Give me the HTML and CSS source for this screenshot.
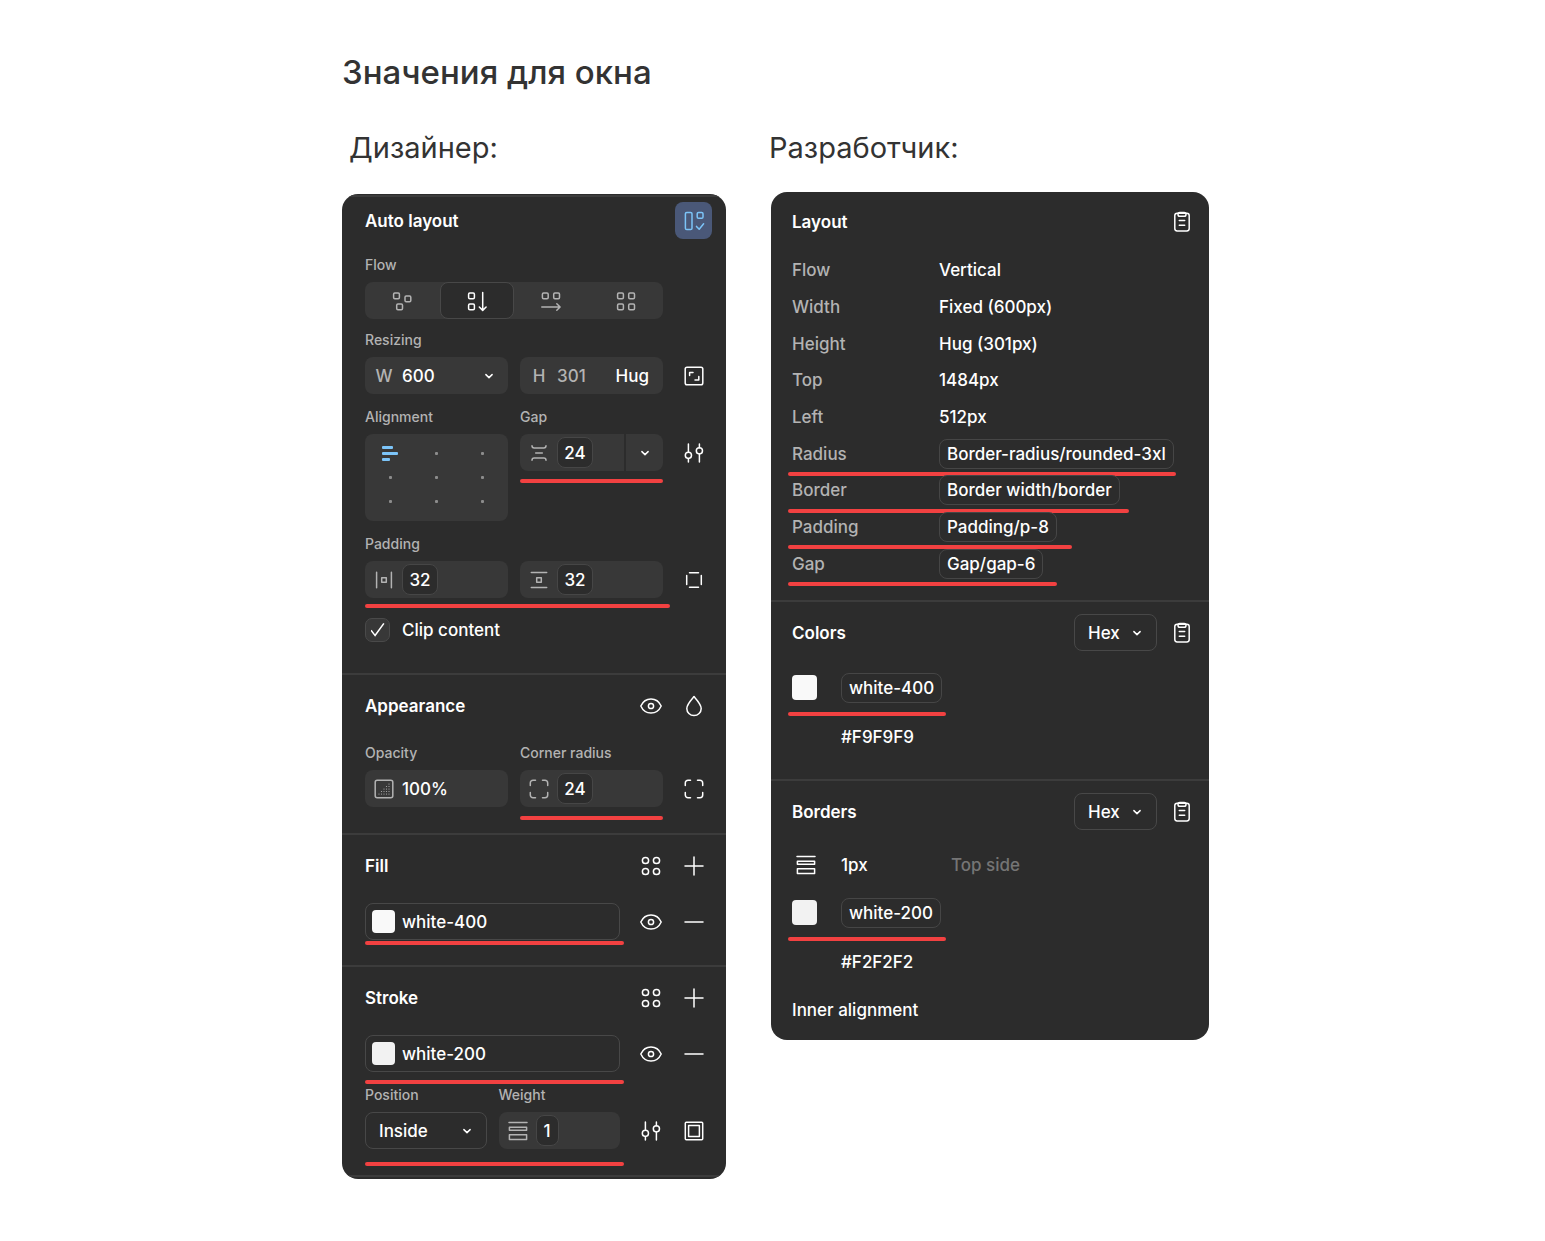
FILE: index.html
```html
<!DOCTYPE html>
<html lang="ru">
<head>
  <meta charset="UTF-8" />
  <meta name="viewport" content="width=device-width, initial-scale=1" />
  <title>Значения для окна</title>
  <link rel="stylesheet" href="styles.css">
</head>
<body>

  <!-- Icon sprite -->
  <svg class="sprite" aria-hidden="true">
    <symbol id="i-clipboard" viewBox="0 0 24 24"><rect x="4.8" y="3.2" width="14.4" height="17.8" rx="2.4"/><rect x="8" y="2.4" width="8" height="3.8" rx="1.8"/><path d="M9.3 10.6h5.4M9.3 15.2h5.4"/></symbol>
    <symbol id="i-autolayout" viewBox="0 0 24 24"><rect x="3.4" y="3.4" width="6.6" height="17.2" rx="1.4"/><rect x="15.2" y="3.4" width="5.8" height="5.8" rx="1.3"/><path d="M14.5 17.4l2.7 2.8 4.4-5.4"/></symbol>
    <symbol id="i-free" viewBox="0 0 24 24"><rect x="3.6" y="4" width="5.8" height="5.8" rx="1.2"/><rect x="15" y="7" width="5.8" height="5.8" rx="1.2"/><rect x="6.7" y="15" width="5.8" height="5.8" rx="1.2"/></symbol>
    <symbol id="i-vertical" viewBox="0 0 24 24"><rect x="3.6" y="4" width="5.8" height="5.8" rx="1.2"/><rect x="3.6" y="15" width="5.8" height="5.8" rx="1.2"/><path d="M17.7 3.4v17.8M14.3 18l3.4 3.4 3.4-3.4"/></symbol>
    <symbol id="i-horizontal" viewBox="0 0 24 24"><rect x="3.4" y="4" width="5.8" height="5.8" rx="1.2"/><rect x="14.7" y="4" width="5.8" height="5.8" rx="1.2"/><path d="M2.8 18h18M17.8 14.7l3.3 3.3-3.3 3.3"/></symbol>
    <symbol id="i-grid" viewBox="0 0 24 24"><rect x="3.6" y="4" width="5.8" height="5.8" rx="1.2"/><rect x="14.7" y="4" width="5.8" height="5.8" rx="1.2"/><rect x="3.6" y="15" width="5.8" height="5.8" rx="1.2"/><rect x="14.7" y="15" width="5.8" height="5.8" rx="1.2"/></symbol>
    <symbol id="i-fit" viewBox="0 0 24 24"><rect x="3.2" y="3.2" width="17.6" height="17.6" rx="1.8"/><path d="M7.6 11.4V8.4h3.4M13 16h3.8v-3.6"/></symbol>
    <symbol id="i-chevron" viewBox="0 0 24 24"><path d="M8.9 10.6l3.1 3 3.1-3"/></symbol>
    <symbol id="i-gap" viewBox="0 0 24 24"><path d="M5 4.8c0 1.6.8 2.2 2.2 2.2h9.6c1.4 0 2.2-.6 2.2-2.2M8.7 12h6.6M5 19.2c0-1.6.8-2.2 2.2-2.2h9.6c1.4 0 2.2.6 2.2 2.2"/></symbol>
    <symbol id="i-adjust" viewBox="0 0 24 24"><circle cx="6.4" cy="14.3" r="3.1"/><circle cx="17.4" cy="9.8" r="3.1"/><path d="M6.4 3v8.2M6.4 17.4V21M17.4 3v3.7M17.4 12.9V21"/></symbol>
    <symbol id="i-pad-x" viewBox="0 0 24 24"><rect x="9.7" y="9.7" width="4.6" height="4.6"/><path d="M4.6 4.3v15.4M19.4 4.3v15.4"/></symbol>
    <symbol id="i-pad-y" viewBox="0 0 24 24"><rect x="9.7" y="9.7" width="4.6" height="4.6"/><path d="M4.3 4.6h15.4M4.3 19.4h15.4"/></symbol>
    <symbol id="i-sides" viewBox="0 0 24 24"><path d="M4.7 7.5v9M19.3 7.5v9M7.5 4.7h9M7.5 19.3h9"/></symbol>
    <symbol id="i-eye" viewBox="0 0 24 24"><path d="M1.8 12C4 7.2 7.7 5 12 5s8 2.2 10.2 7c-2.2 4.8-5.9 7-10.2 7s-8-2.2-10.2-7z"/><circle cx="12" cy="12" r="2.6"/></symbol>
    <symbol id="i-drop" viewBox="0 0 24 24"><path d="M12 2.5C9 6 4.8 10.5 4.8 14.4a7.2 7.2 0 0 0 14.4 0C19.2 10.5 15 6 12 2.5z"/></symbol>
    <symbol id="i-opacity" viewBox="0 0 24 24"><rect x="3.2" y="3.2" width="17.6" height="17.6" rx="2"/><path class="dots" d="M7 17h0M9.500 17h0M12 17h0M14.500 17h0M17 17h0M9.500 14.500h0M12 14.500h0M14.500 14.500h0M17 14.500h0M12 12h0M14.500 12h0M17 12h0M14.500 9.500h0M17 9.500h0M17 7h0"/></symbol>
    <symbol id="i-corners" viewBox="0 0 24 24"><path d="M3.3 8.5V6A2.7 2.7 0 0 1 6 3.3h2.500M15.500 3.300H18A2.700 2.700 0 0 1 20.700 6v2.500M20.700 15.500V18a2.700 2.700 0 0 1-2.700 2.700h-2.500M8.500 20.700H6A2.700 2.700 0 0 1 3.300 18v-2.500"/></symbol>
    <symbol id="i-styles" viewBox="0 0 24 24"><circle cx="6.5" cy="6.5" r="3.1"/><circle cx="17.5" cy="6.5" r="3.1"/><circle cx="6.5" cy="17.5" r="3.1"/><circle cx="17.5" cy="17.5" r="3.1"/></symbol>
    <symbol id="i-plus" viewBox="0 0 24 24"><path d="M3 12h18M12 3v18"/></symbol>
    <symbol id="i-minus" viewBox="0 0 24 24"><path d="M3 12h18"/></symbol>
    <symbol id="i-weight" viewBox="0 0 24 24"><path d="M3 3.5h18"/><rect x="3.4" y="8.2" width="17.2" height="3"/><rect x="3.4" y="15.8" width="17.2" height="4.7"/></symbol>
    <symbol id="i-box" viewBox="0 0 24 24"><rect x="3.3" y="3.3" width="17.4" height="17.4" rx="1"/><rect x="6.6" y="6.6" width="10.8" height="10.8"/></symbol>
  </svg>

  <main class="page">
    <h1>Значения для окна</h1>

    <div class="roles">
      <h2 class="role-design">Дизайнер:</h2>
      <h2>Разработчик:</h2>
    </div>

    <div class="panels">

      <!-- Design panel -->
      <div class="panel panel-design">
        <section class="section section-layout">
          <header class="section-head">
            <h3>Auto layout</h3>
            <button class="icon-btn active" aria-label="Auto layout"><svg class="icon"><use href="#i-autolayout"/></svg></button>
          </header>

          <div class="row">
            <div class="control wide">
              <span class="label">Flow</span>
              <div class="segments">
                <button aria-label="Free"><svg class="icon"><use href="#i-free"/></svg></button>
                <button class="active" aria-label="Vertical"><svg class="icon"><use href="#i-vertical"/></svg></button>
                <button aria-label="Horizontal"><svg class="icon"><use href="#i-horizontal"/></svg></button>
                <button aria-label="Grid"><svg class="icon"><use href="#i-grid"/></svg></button>
              </div>
            </div>
          </div>

          <div class="row row-size">
            <div class="control">
              <span class="label">Resizing</span>
              <div class="field">
                <label class="prefix" for="width">W</label>
                <input class="text" id="width" type="text" value="600">
                <button class="mini-btn" aria-label="Width mode"><svg class="icon"><use href="#i-chevron"/></svg></button>
              </div>
            </div>
            <div class="control">
              <div class="field">
                <label class="prefix" for="height">H</label>
                <input class="text muted" id="height" type="text" value="301">
                <button class="mode-btn">Hug</button>
              </div>
            </div>
            <button class="icon-btn" aria-label="Resize to fit"><svg class="icon"><use href="#i-fit"/></svg></button>
          </div>

          <div class="row row-top">
            <div class="control">
              <span class="label">Alignment</span>
              <div class="align-grid">
                <button class="active" aria-label="Top left"><i></i><i></i><i></i></button>
                <button aria-label="Top center"></button>
                <button aria-label="Top right"></button>
                <button aria-label="Left"></button>
                <button aria-label="Center"></button>
                <button aria-label="Right"></button>
                <button aria-label="Bottom left"></button>
                <button aria-label="Bottom center"></button>
                <button aria-label="Bottom right"></button>
              </div>
            </div>
            <div class="control">
              <label class="label" for="gap">Gap</label>
              <div class="split">
                <div class="field">
                  <svg class="icon"><use href="#i-gap"/></svg>
                  <input class="token" id="gap" type="text" value="24">
                </div>
                <button class="split-btn" aria-label="Gap options"><svg class="icon"><use href="#i-chevron"/></svg></button>
                <span class="mark mark-gap"></span>
              </div>
            </div>
            <button class="icon-btn below-label" aria-label="Layout settings"><svg class="icon"><use href="#i-adjust"/></svg></button>
          </div>

          <div class="row">
            <div class="control">
              <span class="label">Padding</span>
              <div class="field">
                <svg class="icon"><use href="#i-pad-x"/></svg>
                <input class="token" type="text" value="32" aria-label="Horizontal padding">
              </div>
            </div>
            <div class="control">
              <div class="field">
                <svg class="icon"><use href="#i-pad-y"/></svg>
                <input class="token" type="text" value="32" aria-label="Vertical padding">
              </div>
            </div>
            <button class="icon-btn" aria-label="Individual padding"><svg class="icon"><use href="#i-sides"/></svg></button>
            <span class="mark mark-padding"></span>
          </div>

          <label class="check">
            <input type="checkbox" checked>
            Clip content
          </label>
        </section>

        <section class="section section-appearance">
          <header class="section-head">
            <h3>Appearance</h3>
            <button class="icon-btn" aria-label="Visibility"><svg class="icon"><use href="#i-eye"/></svg></button>
            <button class="icon-btn" aria-label="Blend mode"><svg class="icon"><use href="#i-drop"/></svg></button>
          </header>
          <div class="row">
            <div class="control">
              <label class="label" for="opacity">Opacity</label>
              <div class="field">
                <svg class="icon"><use href="#i-opacity"/></svg>
                <input class="text" id="opacity" type="text" value="100%">
              </div>
            </div>
            <div class="control">
              <label class="label" for="radius">Corner radius</label>
              <div class="field">
                <svg class="icon"><use href="#i-corners"/></svg>
                <input class="token" id="radius" type="text" value="24">
                <span class="mark mark-radius"></span>
              </div>
            </div>
            <button class="icon-btn" aria-label="Individual corners"><svg class="icon"><use href="#i-corners"/></svg></button>
          </div>
        </section>

        <section class="section">
          <header class="section-head">
            <h3>Fill</h3>
            <button class="icon-btn" aria-label="Styles"><svg class="icon"><use href="#i-styles"/></svg></button>
            <button class="icon-btn" aria-label="Add fill"><svg class="icon"><use href="#i-plus"/></svg></button>
          </header>
          <div class="paint-row">
            <button class="paint"><span class="swatch white-400"></span>white-400</button>
            <button class="icon-btn" aria-label="Visibility"><svg class="icon"><use href="#i-eye"/></svg></button>
            <button class="icon-btn" aria-label="Remove"><svg class="icon"><use href="#i-minus"/></svg></button>
            <span class="mark mark-fill"></span>
          </div>
        </section>

        <section class="section section-stroke">
          <header class="section-head">
            <h3>Stroke</h3>
            <button class="icon-btn" aria-label="Styles"><svg class="icon"><use href="#i-styles"/></svg></button>
            <button class="icon-btn" aria-label="Add stroke"><svg class="icon"><use href="#i-plus"/></svg></button>
          </header>
          <div class="paint-row">
            <button class="paint"><span class="swatch white-200"></span>white-200</button>
            <button class="icon-btn" aria-label="Visibility"><svg class="icon"><use href="#i-eye"/></svg></button>
            <button class="icon-btn" aria-label="Remove"><svg class="icon"><use href="#i-minus"/></svg></button>
            <span class="mark mark-stroke"></span>
          </div>
          <div class="stroke-row">
            <div class="stroke-fields">
              <div class="control">
                <label class="label" for="position">Position</label>
                <div class="select">
                  <select id="position"><option>Inside</option><option>Center</option><option>Outside</option></select>
                  <svg class="icon"><use href="#i-chevron"/></svg>
                </div>
              </div>
              <div class="control">
                <label class="label" for="weight">Weight</label>
                <div class="field">
                  <svg class="icon"><use href="#i-weight"/></svg>
                  <input class="token token-short" id="weight" type="text" value="1">
                </div>
              </div>
            </div>
            <button class="icon-btn" aria-label="Stroke settings"><svg class="icon"><use href="#i-adjust"/></svg></button>
            <button class="icon-btn" aria-label="Stroke sides"><svg class="icon"><use href="#i-box"/></svg></button>
            <span class="mark mark-options"></span>
          </div>
        </section>
      </div>

      <!-- Dev panel -->
      <div class="panel panel-dev">
        <section class="section">
          <header class="section-head">
            <h3>Layout</h3>
            <button class="copy-btn" aria-label="Copy layout"><svg class="icon"><use href="#i-clipboard"/></svg></button>
          </header>
          <dl class="props">
            <div><dt>Flow</dt><dd>Vertical</dd></div>
            <div><dt>Width</dt><dd>Fixed (600px)</dd></div>
            <div><dt>Height</dt><dd>Hug (301px)</dd></div>
            <div><dt>Top</dt><dd>1484px</dd></div>
            <div><dt>Left</dt><dd>512px</dd></div>
            <div><dt>Radius</dt><dd><span class="chip">Border-radius/rounded-3xl</span></dd><span class="mark mark-prop-radius"></span></div>
            <div><dt>Border</dt><dd><span class="chip">Border width/border</span></dd><span class="mark mark-prop-border"></span></div>
            <div><dt>Padding</dt><dd><span class="chip">Padding/p-8</span></dd><span class="mark mark-prop-padding"></span></div>
            <div><dt>Gap</dt><dd><span class="chip">Gap/gap-6</span></dd><span class="mark mark-prop-gap"></span></div>
          </dl>
        </section>

        <section class="section">
          <header class="section-head">
            <h3>Colors</h3>
            <div class="select select-hex">
              <select aria-label="Color format"><option>Hex</option><option>RGB</option></select>
              <svg class="icon"><use href="#i-chevron"/></svg>
            </div>
            <button class="copy-btn" aria-label="Copy colors"><svg class="icon"><use href="#i-clipboard"/></svg></button>
          </header>
          <div class="value-row">
            <span class="swatch white-400"></span>
            <span><span class="chip">white-400</span></span>
            <span class="mark mark-color"></span>
          </div>
          <div class="value-row"><span class="value">#F9F9F9</span></div>
        </section>

        <section class="section">
          <header class="section-head">
            <h3>Borders</h3>
            <div class="select select-hex">
              <select aria-label="Border color format"><option>Hex</option><option>RGB</option></select>
              <svg class="icon"><use href="#i-chevron"/></svg>
            </div>
            <button class="copy-btn" aria-label="Copy borders"><svg class="icon"><use href="#i-clipboard"/></svg></button>
          </header>
          <div class="value-row value-row-side">
            <svg class="icon"><use href="#i-weight"/></svg>
            <span>1px</span>
            <span class="side">Top side</span>
          </div>
          <div class="value-row">
            <span class="swatch white-200"></span>
            <span><span class="chip">white-200</span></span>
            <span class="mark mark-color"></span>
          </div>
          <div class="value-row"><span class="value">#F2F2F2</span></div>
          <p class="note">Inner alignment</p>
        </section>
      </div>

    </div>
  </main>

</body>
</html>
```
FILE: styles.css
```css
* {
  box-sizing: border-box;
}

body {
  margin: 0;
  padding: 48px 0 48px 6px;
  background-color: #ffffff;
  color: #333333;
  font-family: Inter, "Liberation Sans", sans-serif;
}

h1, h2, h3, p, dl, dd {
  margin: 0;
}

button, input, select {
  font: inherit;
  color: inherit;
  border: none;
  background: none;
  padding: 0;
  margin: 0;
}

button, select {
  cursor: pointer;
}

.sprite {
  position: absolute;
  width: 0;
  height: 0;
}

.icon {
  display: block;
  flex: none;
  width: 24px;
  height: 24px;
  fill: none;
  stroke: currentColor;
  stroke-width: 1.5;
  stroke-linecap: round;
  stroke-linejoin: round;
}

.dots {
  stroke-width: 1.2;
}

/* Page */
.page {
  max-width: 867px;
  margin: 0 auto;
}

h1 {
  font-size: 33px;
  font-weight: 500;
  line-height: 48px;
}

.roles {
  display: grid;
  grid-template-columns: 427fr 440fr;
  margin: 32px 0 24px;
}

.roles h2 {
  font-size: 29px;
  font-weight: 400;
  line-height: 40px;
}

.role-design {
  padding-left: 7px;
}

.panels {
  display: grid;
  grid-template-columns: 384fr 438fr;
  gap: 45px;
  align-items: start;
}

.panel {
  background-color: #2c2c2c;
  color: #ffffff;
  border-radius: 16px;
  font-size: 17px;
  font-weight: 500;
  line-height: 24px;
  overflow: hidden;
}

.panel-design {
  margin-top: 2px;
  padding: 1px 0 2px;
}

.section {
  padding: 12px 14px 25px 23px;
  border-top: 2px solid #3c3c3c;
}

.section-layout {
  padding-top: 5px;
  padding-bottom: 31px;
}

.section-appearance,
.section-stroke {
  padding-bottom: 26px;
}

.section-stroke {
  border-bottom: 2px solid #3c3c3c;
}

.section-head {
  display: flex;
  align-items: center;
  gap: 6px;
  height: 37px;
  margin-bottom: 19px;
}

.section-layout .section-head {
  margin-bottom: 16px;
}

.section-head h3 {
  flex: 1;
  font-size: 17px;
  font-weight: 600;
  line-height: 24px;
}

.icon-btn {
  display: flex;
  flex: none;
  align-items: center;
  justify-content: center;
  width: 37px;
  height: 37px;
  border-radius: 8px;
}

.icon-btn.active {
  background-color: #4a5878;
  color: #7cc4f8;
}

/* Controls */
.row {
  position: relative;
  display: grid;
  grid-template-columns: 1fr 1fr 37px;
  gap: 12px;
  align-items: end;
}

.row + .row {
  margin-top: 13px;
}

.row + .row-size {
  margin-top: 11px;
}

.row-top {
  align-items: start;
}

.control {
  min-width: 0;
}

.wide {
  grid-column: span 2;
}

.below-label {
  margin-top: 27px;
}

.label {
  display: block;
  margin-bottom: 7px;
  color: #b3b3b3;
  font-size: 14px;
  font-weight: 500;
  line-height: 20px;
}

.field {
  position: relative;
  display: flex;
  align-items: center;
  gap: 6px;
  height: 37px;
  padding: 0 7px;
  border-radius: 8px;
  background-color: #383838;
}

.field .icon {
  color: #b3b3b3;
}

.prefix {
  width: 24px;
  flex: none;
  text-align: center;
  color: #b3b3b3;
}

.text {
  flex: 1;
  width: 0;
}

.muted {
  color: #b3b3b3;
}

.field .mini-btn .icon {
  color: #ffffff;
}

.mode-btn {
  padding: 0 7px;
}

.token {
  width: 36px;
  height: 31px;
  border: 1px solid #464646;
  border-radius: 8px;
  background-color: #2c2c2c;
  text-align: center;
}

.token-short {
  width: 23px;
}

.segments {
  display: grid;
  grid-template-columns: repeat(4, 1fr);
  height: 37px;
  border-radius: 8px;
  background-color: #383838;
  color: #b3b3b3;
}

.segments button {
  display: flex;
  align-items: center;
  justify-content: center;
  border-radius: 8px;
}

.segments .active {
  border: 1px solid #484848;
  background-color: #2c2c2c;
  color: #ffffff;
}

.align-grid {
  display: grid;
  grid-template-columns: repeat(3, 1fr);
  grid-template-rows: repeat(3, 1fr);
  height: 87px;
  padding: 7px 2px;
  border-radius: 8px;
  background-color: #383838;
}

.align-grid button {
  display: flex;
  align-items: center;
  justify-content: center;
}

.align-grid button:not(.active)::before {
  content: "";
  width: 3px;
  height: 3px;
  border-radius: 1px;
  background-color: #8c8c8c;
}

.align-grid .active {
  flex-direction: column;
  align-items: flex-start;
  gap: 3px;
  padding-left: 15px;
}

.align-grid i {
  width: 11px;
  height: 3px;
  border-radius: 1px;
  background-color: #7cc4f8;
}

.align-grid i:nth-child(2) {
  width: 16px;
}

.align-grid i:nth-child(3) {
  width: 8px;
}

.split {
  position: relative;
  display: flex;
  gap: 2px;
}

.split .field {
  flex: 1;
  border-radius: 8px 0 0 8px;
}

.split-btn {
  display: flex;
  align-items: center;
  justify-content: center;
  width: 37px;
  border-radius: 0 8px 8px 0;
  background-color: #383838;
}

.check {
  display: flex;
  align-items: center;
  gap: 12px;
  margin-top: 20px;
}

.check input {
  appearance: none;
  display: grid;
  place-items: center;
  width: 25px;
  height: 24px;
  border: 1px solid #4a4a4a;
  border-radius: 7px;
  background-color: #383838;
}

.check input:checked::before {
  content: "";
  width: 14px;
  height: 14px;
  background-color: #ffffff;
  clip-path: polygon(0 55%, 8% 48%, 32% 80%, 91% 0, 100% 6%, 33% 98%);
}

.paint-row,
.stroke-row {
  position: relative;
  display: flex;
  align-items: flex-end;
  gap: 6px;
}

.paint {
  display: flex;
  flex: 1;
  align-items: center;
  gap: 7px;
  height: 37px;
  margin-right: 6px;
  padding: 0 6px;
  border: 1px solid #484848;
  border-radius: 8px;
}

.swatch {
  width: 23px;
  height: 23px;
  border-radius: 4px;
}

.white-400 {
  background-color: #f9f9f9;
}

.white-200 {
  background-color: #f2f2f2;
}

.stroke-row {
  margin-top: 13px;
}

.stroke-fields {
  display: grid;
  grid-template-columns: 1fr 1fr;
  gap: 12px;
  flex: 1;
  margin-right: 6px;
}

.select {
  position: relative;
}

.select select {
  appearance: none;
  width: 100%;
  height: 37px;
  padding: 0 32px 0 13px;
  border: 1px solid #484848;
  border-radius: 8px;
}

.select .icon {
  position: absolute;
  top: 7px;
  right: 8px;
  pointer-events: none;
}

.select option {
  background-color: #2c2c2c;
}

/* Dev panel */
.panel-dev .section {
  padding: 12px 15px 18px 21px;
}

.panel-dev .section:first-child {
  padding-top: 11px;
  border-top: none;
}

.panel-dev .section:last-child {
  padding-bottom: 5px;
}

.panel-dev .section-head {
  gap: 13px;
  margin-bottom: 12px;
}

.select-hex {
  width: 83px;
}

.props {
  display: grid;
  grid-auto-rows: 1fr;
  min-height: 330px;
}

.props div {
  position: relative;
  display: grid;
  grid-template-columns: 147px 1fr;
  align-items: center;
}

.props dt {
  color: #b3b3b3;
}

.chip {
  display: inline-block;
  padding: 2px 7px;
  border: 1px solid #464646;
  border-radius: 8px;
}

.value-row {
  position: relative;
  display: grid;
  grid-template-columns: 49px 110px 1fr;
  align-items: center;
  height: 49px;
}

.value-row-side {
  height: 46px;
}

.value-row .swatch {
  width: 25px;
  height: 25px;
}

.value-row .icon {
  margin-left: 2px;
}

.value {
  grid-column: 2;
}

.side {
  color: #757575;
}

.note {
  line-height: 49px;
}

/* Red underlines */
.mark {
  position: absolute;
  left: 0;
  height: 4px;
  border-radius: 2px;
  background-color: #f24141;
}

.mark-gap {
  bottom: -12px;
  width: 100%;
}

.mark-padding {
  bottom: -10px;
  width: 305px;
}

.mark-radius {
  bottom: -13px;
  width: 100%;
}

.mark-fill,
.mark-stroke,
.mark-options {
  width: 259px;
}

.mark-fill {
  bottom: -5px;
}

.mark-stroke {
  bottom: -12px;
}

.mark-options {
  bottom: -17px;
}

.panel-dev .mark {
  left: -4px;
}

.props .mark {
  bottom: -4px;
}

.mark-prop-radius {
  width: 388px;
}

.mark-prop-border {
  width: 341px;
}

.mark-prop-padding {
  width: 284px;
}

.mark-prop-gap {
  width: 269px;
}

.mark-color {
  bottom: -4px;
  width: 158px;
}
```
